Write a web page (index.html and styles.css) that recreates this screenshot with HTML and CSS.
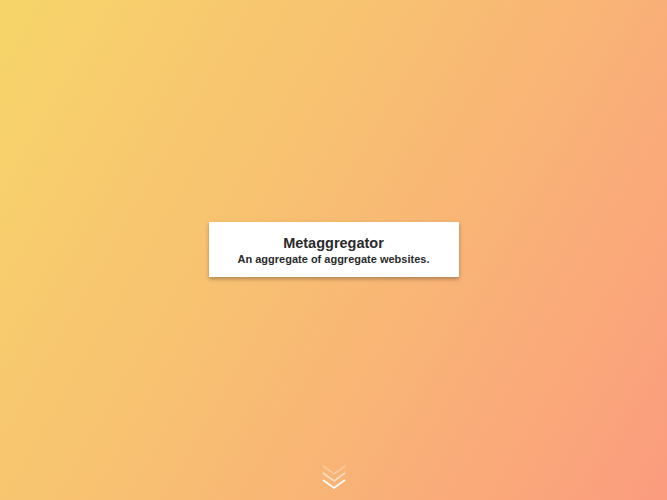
FILE: index.html
```html
<!DOCTYPE html>
<html lang="en">
<head>
<meta charset="utf-8">
<title>Metaggregator</title>
<link rel="stylesheet" href="styles.css">
</head>
<body>
<div class="page">
  <main class="hero">
    <div class="card">
      <h1 class="title">Metaggregator</h1>
      <p class="subtitle">An aggregate of aggregate websites.</p>
    </div>
  </main>
  <footer class="footer">
    <svg class="chevrons" width="26" height="28" viewBox="0 0 26 28" aria-hidden="true">
      <polyline points="2,2 13,10 24,2" class="c1"/>
      <polyline points="2,9 13,17 24,9" class="c2"/>
      <polyline points="2,16 13,24 24,16" class="c3"/>
    </svg>
  </footer>
</div>
</body>
</html>
```
FILE: styles.css
```css
html, body {
  margin: 0;
  padding: 0;
  height: 100%;
}
body {
  font-family: "Liberation Sans", Arial, sans-serif;
  background: linear-gradient(120deg, #f7d56a 0%, #f8bc73 50%, #fb9c7e 100%);
  color: #333;
}
.page {
  height: 100%;
  display: flex;
  flex-direction: column;
}
.hero {
  flex: 1;
  display: flex;
  align-items: center;
  justify-content: center;
  padding-top: 35px;
}
.card {
  width: 250px;
  height: 55px;
  box-sizing: border-box;
  padding-top: 2px;
  background: #fff;
  box-shadow: 0 2px 4px rgba(0, 0, 0, 0.3);
  display: flex;
  flex-direction: column;
  align-items: center;
  justify-content: center;
}
.title {
  margin: 0;
  font-size: 14.5px;
  font-weight: 700;
  line-height: 17px;
  color: #2b2b2b;
}
.subtitle {
  margin: 0;
  font-size: 11px;
  font-weight: 700;
  line-height: 15px;
  color: #2b2b2b;
}
.footer {
  display: flex;
  justify-content: center;
  padding-bottom: 8px;
}
.chevrons polyline {
  fill: none;
  stroke: #fff;
  stroke-width: 1.6;
}
.chevrons .c1 { opacity: 0.3; }
.chevrons .c2 { opacity: 0.6; }
.chevrons .c3 { opacity: 1; }
```
